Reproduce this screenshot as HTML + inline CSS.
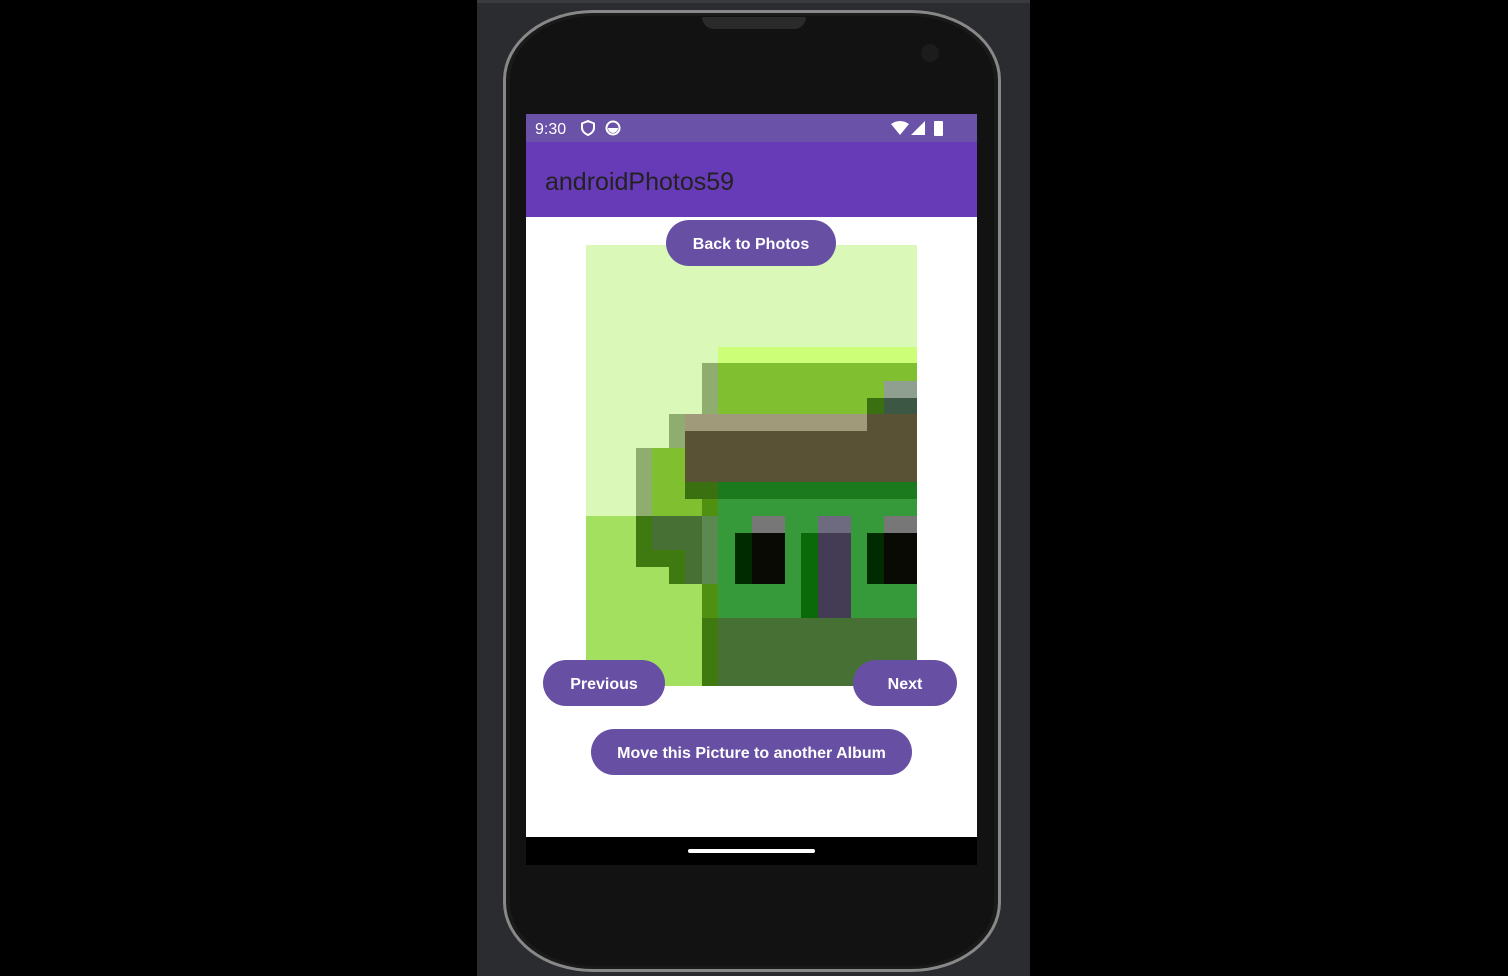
<!DOCTYPE html><html><head><style>
body{margin:0;width:1508px;height:976px;background:#000;position:relative;overflow:hidden;font-family:"Liberation Sans",sans-serif}
.a{position:absolute}
.btn{position:absolute;background:#6750a4;color:#fff;font-weight:bold;font-size:16px;border-radius:24px;display:flex;align-items:center;justify-content:center;height:46px;padding-top:3px;box-sizing:border-box}
</style></head><body>
<div class="a" style="left:477px;top:0;width:553px;height:976px;background:#2b2c30"></div>
<div class="a" style="left:477px;top:0;width:553px;height:3px;background:#3a3b3f"></div>
<div class="a" style="left:503px;top:10px;width:498px;height:962px;border-radius:90px/70px;background:#1a1a1b;border:3px solid #888;box-sizing:border-box"></div>
<div class="a" style="left:510px;top:16px;width:484px;height:950px;border-radius:84px/64px;background:#121213"></div>
<div class="a" style="left:702px;top:17px;width:104px;height:12px;background:#2a2a2a;border-radius:0 0 20px 20px"></div>
<div class="a" style="left:921px;top:44px;width:18px;height:18px;border-radius:50%;background:#1c1c1d"></div>
<div class="a" style="left:526px;top:114px;width:451px;height:751px;background:#fff"></div>
<div class="a" style="left:526px;top:114px;width:451px;height:28px;background:#6a52a8;color:#fff;font-size:16px"><span class="a" style="left:9px;top:7px">9:30</span>
<svg class="a" style="left:54px;top:6px" width="16" height="16" viewBox="0 0 16 16"><path d="M8 1L2 3.5V8c0 3 3 6 6 7 3-1 6-4 6-7V3.5z" fill="none" stroke="#fff" stroke-width="2"/></svg>
<svg class="a" style="left:79px;top:6px" width="16" height="16"><circle cx="8" cy="8" r="6.5" fill="none" stroke="#fff" stroke-width="2"/><path d="M3 8a5 5 0 0 0 10 0z" fill="#fff"/></svg>
<svg class="a" style="left:365px;top:7px" width="18" height="14"><path d="M0 3Q9-3 18 3L9 14z" fill="#fff"/></svg>
<svg class="a" style="left:385px;top:7px" width="14" height="14"><path d="M14 0V14H0z" fill="#fff"/></svg>
<div class="a" style="left:408px;top:7px;width:9px;height:15px;background:#fff;border-radius:1px"></div></div>
<div class="a" style="left:526px;top:142px;width:451px;height:75px;background:#673ab7;color:#222;font-size:25px"><span class="a" style="left:19px;top:26px">androidPhotos59</span></div>
<svg class="a" style="left:586px;top:245px" width="331" height="441" viewBox="586 245 331 441">
<rect x="586" y="245" width="331" height="441" fill="#daf8b8"/>
<rect x="586" y="516" width="132" height="170" fill="#a3e060"/>
<rect x="718" y="347" width="199" height="16" fill="#ccff77"/>
<rect x="718" y="363" width="199" height="51" fill="#80c030"/>
<rect x="702" y="363" width="16" height="51" fill="#90ad70"/>
<rect x="669" y="414" width="16" height="34" fill="#90ad70"/>
<rect x="636" y="448" width="16" height="68" fill="#90ad70"/>
<rect x="652" y="448" width="50" height="68" fill="#80c030"/>
<rect x="685" y="414" width="182" height="17" fill="#a09a7a"/>
<rect x="867" y="398" width="50" height="33" fill="#5a5234"/>
<rect x="867" y="398" width="17" height="16" fill="#3a7010"/>
<rect x="884" y="381" width="33" height="17" fill="#90a090"/>
<rect x="884" y="398" width="33" height="16" fill="#3c5844"/>
<rect x="685" y="431" width="232" height="51" fill="#5a5234"/>
<rect x="718" y="482" width="199" height="17" fill="#1c7a1e"/>
<rect x="685" y="482" width="33" height="17" fill="#3a7010"/>
<rect x="702" y="499" width="16" height="17" fill="#509010"/>
<rect x="718" y="499" width="199" height="119" fill="#36993a"/>
<rect x="702" y="516" width="16" height="68" fill="#5a8a50"/>
<rect x="702" y="584" width="16" height="34" fill="#509010"/>
<rect x="702" y="618" width="16" height="68" fill="#3f7a10"/>
<rect x="718" y="618" width="199" height="68" fill="#467034"/>
<rect x="636" y="516" width="16" height="51" fill="#3f7a10"/>
<rect x="652" y="516" width="50" height="34" fill="#467034"/>
<rect x="636" y="550" width="49" height="17" fill="#3f7a10"/>
<rect x="685" y="550" width="17" height="34" fill="#467034"/>
<rect x="669" y="567" width="16" height="17" fill="#3f7a10"/>
<rect x="752" y="516" width="33" height="17" fill="#777"/>
<rect x="752" y="533" width="33" height="51" fill="#0a0a04"/>
<rect x="735" y="533" width="17" height="51" fill="#002a00"/>
<rect x="818" y="516" width="33" height="17" fill="#6e6a80"/>
<rect x="818" y="533" width="33" height="85" fill="#443c55"/>
<rect x="801" y="533" width="17" height="85" fill="#0a6a0a"/>
<rect x="884" y="516" width="33" height="17" fill="#777"/>
<rect x="867" y="533" width="17" height="51" fill="#002a00"/>
<rect x="884" y="533" width="33" height="51" fill="#0a0a04"/>
</svg>
<div class="btn" style="left:666px;top:220px;width:170px">Back to Photos</div>
<div class="btn" style="left:543px;top:660px;width:122px">Previous</div>
<div class="btn" style="left:853px;top:660px;width:104px">Next</div>
<div class="btn" style="left:591px;top:729px;width:321px">Move this Picture to another Album</div>
<div class="a" style="left:526px;top:837px;width:451px;height:28px;background:#000"></div>
<div class="a" style="left:688px;top:849px;width:127px;height:4px;border-radius:2px;background:#fff"></div>
</body></html>
